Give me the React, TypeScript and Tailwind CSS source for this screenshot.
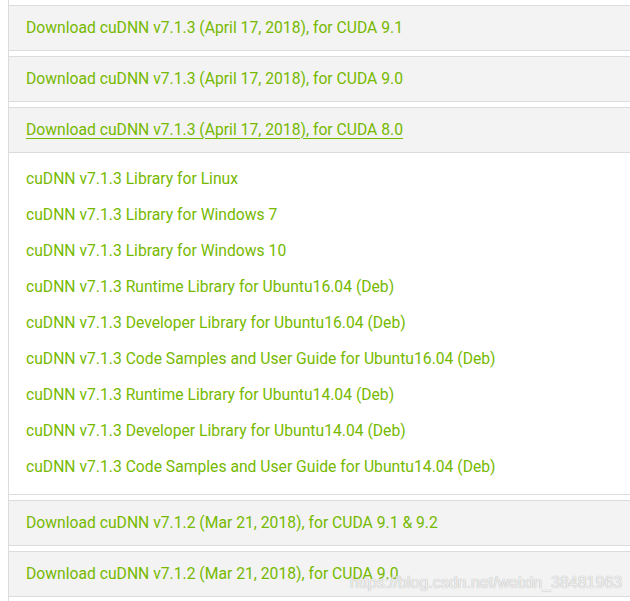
import React from "react";

const sections = [
  { title: "Download cuDNN v7.1.3 (April 17, 2018), for CUDA 9.1" },
  { title: "Download cuDNN v7.1.3 (April 17, 2018), for CUDA 9.0" },
  {
    title: "Download cuDNN v7.1.3 (April 17, 2018), for CUDA 8.0",
    open: true,
    items: [
      "cuDNN v7.1.3 Library for Linux",
      "cuDNN v7.1.3 Library for Windows 7",
      "cuDNN v7.1.3 Library for Windows 10",
      "cuDNN v7.1.3 Runtime Library for Ubuntu16.04 (Deb)",
      "cuDNN v7.1.3 Developer Library for Ubuntu16.04 (Deb)",
      "cuDNN v7.1.3 Code Samples and User Guide for Ubuntu16.04 (Deb)",
      "cuDNN v7.1.3 Runtime Library for Ubuntu14.04 (Deb)",
      "cuDNN v7.1.3 Developer Library for Ubuntu14.04 (Deb)",
      "cuDNN v7.1.3 Code Samples and User Guide for Ubuntu14.04 (Deb)",
    ],
  },
  { title: "Download cuDNN v7.1.2 (Mar 21, 2018), for CUDA 9.1 & 9.2" },
  { title: "Download cuDNN v7.1.2 (Mar 21, 2018), for CUDA 9.0" },
];

export default function App() {
  return (
    <div className="relative w-[630px] h-[601px] overflow-hidden bg-white font-['Roboto',sans-serif] text-[15.7px] text-[#76b900]">
      <div className="ml-[8px] border-l border-[#dcdcdc] pt-[5px] h-full flex flex-col gap-[5px]">
        {sections.map((s, i) => (
          <div key={i} className="flex flex-col">
            <div className="h-[46px] bg-[#f3f3f3] border-y border-[#dcdcdc] flex items-center pl-[17px] pb-[1px]">
              <span className={s.open ? "underline underline-offset-[3px] decoration-[1px]" : ""}>{s.title}</span>
            </div>
            {s.items && (
              <div className="bg-white border-b border-[#dcdcdc] pt-[8px] pb-[9px] pl-[17px] flex flex-col">
                {s.items.map((it) => (
                  <div key={it} className="h-[36px] flex items-center">
                    {it}
                  </div>
                ))}
              </div>
            )}
          </div>
        ))}
      </div>
      <div className="absolute left-[350px] top-[571px] font-['Liberation_Sans',sans-serif] text-[16px] text-[#f0f0f0] [text-shadow:0_0_1px_#9a9a9a]">
        https://blog.csdn.net/weixin_38481963
      </div>
    </div>
  );
}
